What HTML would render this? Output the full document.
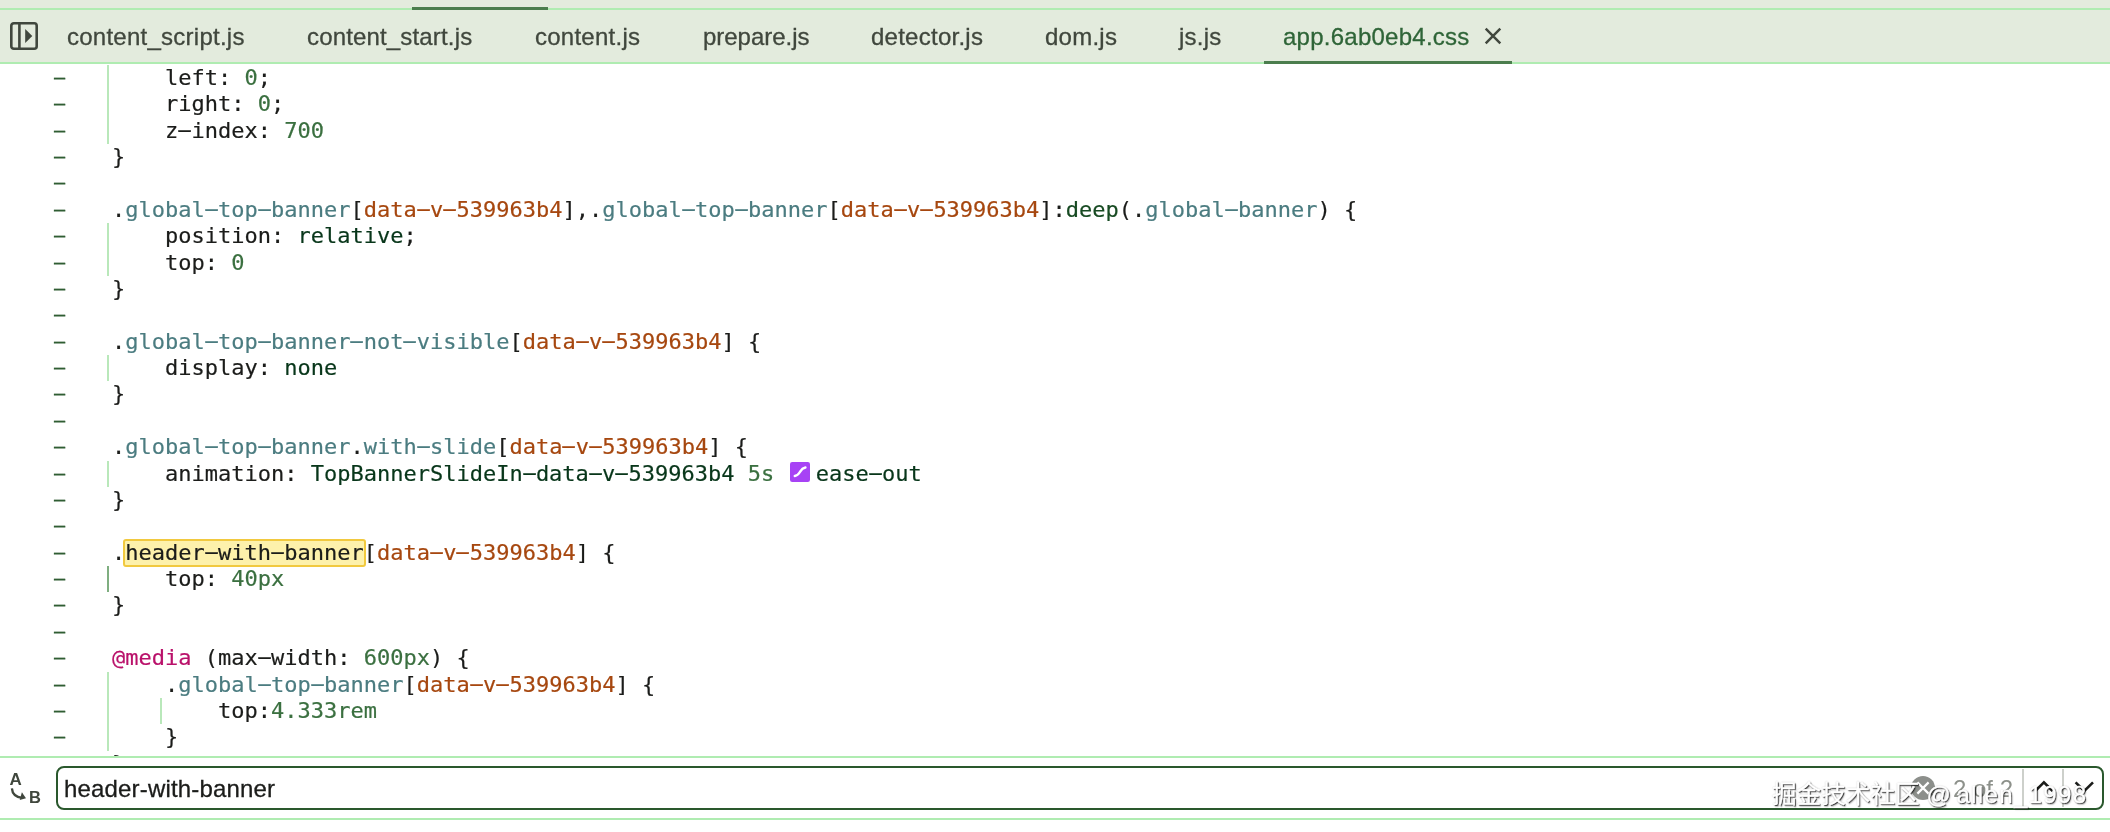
<!DOCTYPE html>
<html lang="en">
<head>
<meta charset="utf-8">
<title>DevTools Sources</title>
<style>
  html, body { margin: 0; padding: 0; }
  body {
    width: 2110px; height: 832px; overflow: hidden; position: relative;
    background: #ffffff;
    font-family: "Liberation Sans", "Noto Sans CJK SC", sans-serif;
  }
  /* ---------- top tab bar ---------- */
  #tabbar {
    position: absolute; left: 0; top: 0; width: 2110px; height: 64px;
    background: #e3ebdd; will-change: transform;
  }
  #tabbar .line-top { position: absolute; left: 0; top: 8px; width: 100%; height: 2px; background: #afecb1; }
  #tabbar .line-bot { position: absolute; left: 0; top: 62px; width: 100%; height: 2px; background: #afecb1; }
  #tabbar .dark-top { position: absolute; left: 412px; top: 7px; width: 136px; height: 3px; background: #4b7d4d; }
  #tabbar .sel-line { position: absolute; left: 1264px; top: 61px; width: 247.8px; height: 3px; background: #4b7d4d; }
  .tab {
    position: absolute; top: 22px; height: 30px; line-height: 30px;
    font-size: 24px; color: #40473d; white-space: nowrap;
    letter-spacing: 0.25px; -webkit-text-stroke: 0.3px currentColor;
  }
  .tab.sel { color: #2f6538; }
  #navicon { position: absolute; left: 9px; top: 21px; }
  #closex { position: absolute; left: 1483px; top: 26px; }

  /* ---------- code ---------- */
  #code {
    position: absolute; left: 0; top: 64.6px; width: 2110px; height: 691.4px; overflow: hidden;
    font-family: "DejaVu Sans Mono", "Liberation Mono", monospace;
    font-size: 22px; line-height: 26.37px; color: #1b1c1a;
    -webkit-text-stroke: 0.2px currentColor; will-change: transform;
  }
  .ln { position: absolute; left: 0; height: 26.37px; white-space: pre; }
  .ln .g { position: absolute; left: 53px; top: 0; color: #2f5d33; display: inline-block; transform: scaleX(0.84); transform-origin: 50% 50%; -webkit-text-stroke: 0.3px #2f5d33; margin-top: -1px; }
  .h { display: inline-block; transform: translateY(-1px) scaleX(2.2); transform-origin: 50% 50%; }
  .ln .t { position: absolute; left: 112px; top: 0; white-space: pre; }
  .sel { color: #4b7c80; }
  .att { color: #a6470f; }
  .num { color: #3b7040; }
  .kw  { color: #08361a; }
  .ps  { color: #174a22; }
  .at  { color: #b9116a; }
  .sw { display: inline-block; width: 20px; height: 20px; margin: 0 5.7px 0 2.6px; vertical-align: top; position: relative; top: 1.2px; }
  .sw svg { display: block; }
  .guide { position: absolute; width: 2px; background: #b9e8ba; }
  .guide.act { background: #7fae80; }
  .hl { color: #1b1c1a; }
  .hlbox { position: absolute; background: #fdf1ab; border: 2px solid #f1c93f; border-radius: 3px; }

  /* ---------- search bar ---------- */
  #search { position: absolute; left: 0; top: 756px; width: 2110px; height: 76px; background: #fff; will-change: transform; }
  #search .l1 { position: absolute; left: 0; top: 0; width: 100%; height: 2px; background: #afecb1; }
  #search .l2 { position: absolute; left: 0; top: 62px; width: 100%; height: 2px; background: #afecb1; }
  #box {
    position: absolute; left: 56px; top: 10px; width: 2043.5px; height: 40px;
    border: 2px solid #2a582d; border-radius: 8px; background: #fff;
  }
  #q { position: absolute; left: 64px; top: 18px; font-size: 24px; line-height: 30px; color: #1b1c1a; white-space: nowrap; letter-spacing: 0.17px; -webkit-text-stroke: 0.3px currentColor; }
  #ab { position: absolute; left: 0; top: 0; width: 56px; height: 62px; font-weight: bold; font-size: 17px; line-height: 17px; color: #40473d; }
  #ab .a { position: absolute; left: 9.5px; top: 14.5px; }
  #ab .b { position: absolute; left: 29px; top: 33px; font-size: 16.5px; }
  #ab svg { position: absolute; left: 0; top: 0; }
  #clear { position: absolute; left: 1911px; top: 20px; width: 24px; height: 24px; border-radius: 50%; background: #8c8f8b; }
  #count { position: absolute; left: 1953px; top: 18px; font-size: 24px; line-height: 30px; color: #8d918b; white-space: nowrap; }
  .vsep { position: absolute; top: 12.5px; width: 2px; height: 38.5px; background: #cdd0cb; }
  #chev { position: absolute; left: 2024px; top: 11.4px; }
  #wm {
    position: absolute; left: 1772px; top: 21.5px; font-size: 24.6px; -webkit-text-stroke: 0.4px #fff; line-height: 34px; color: #ffffff; white-space: nowrap;
    text-shadow: 1px 1px 0.8px rgba(0,0,0,0.72), 1.5px 1.5px 1.5px rgba(0,0,0,0.22), 0 0 1.5px rgba(0,0,0,0.3);
  }
  #wm .lat { font-size: 24px; letter-spacing: 1.35px; }
  #wm .atc { margin-right: 4.3px; }
</style>
</head>
<body>

<div id="tabbar">
  <div class="line-top"></div>
  <div class="line-bot"></div>
  <div class="dark-top"></div>
  <div class="sel-line"></div>
  <svg id="navicon" width="30" height="30" viewBox="0 0 30 30">
    <rect x="2.3" y="2.3" width="25.4" height="25.4" rx="2.5" fill="none" stroke="#40473d" stroke-width="2.6"/>
    <rect x="9.1" y="2" width="2.6" height="26" fill="#40473d"/>
    <path d="M16.2 8 L23.3 15 L16.2 22 Z" fill="#40473d"/>
  </svg>
  <div class="tab" style="left:67px">content_script.js</div>
  <div class="tab" style="left:307px;letter-spacing:0.16px">content_start.js</div>
  <div class="tab" style="left:535px">content.js</div>
  <div class="tab" style="left:703px;letter-spacing:-0.03px">prepare.js</div>
  <div class="tab" style="left:871px">detector.js</div>
  <div class="tab" style="left:1045px">dom.js</div>
  <div class="tab" style="left:1179px">js.js</div>
  <div class="tab sel" style="left:1283px">app.6ab0eb4.css</div>
  <svg id="closex" width="20" height="20" viewBox="0 0 20 20">
    <path d="M2.7 2.7 L17.3 17.3 M17.3 2.7 L2.7 17.3" stroke="#40473d" stroke-width="2.45" fill="none"/>
  </svg>
</div>

<div id="code">
  <div class="hlbox" style="left:123.2px;top:473.6px;width:238.5px;height:24.6px"></div>
  <div class="ln" style="top:0.0px"><span class="g">–</span><span class="t">    <span class="pr">left</span>: <span class="num">0</span>;</span></div>
  <div class="ln" style="top:26.37px"><span class="g">–</span><span class="t">    <span class="pr">right</span>: <span class="num">0</span>;</span></div>
  <div class="ln" style="top:52.74px"><span class="g">–</span><span class="t">    <span class="pr">z<span class="h">-</span>index</span>: <span class="num">700</span></span></div>
  <div class="ln" style="top:79.11px"><span class="g">–</span><span class="t">}</span></div>
  <div class="ln" style="top:105.48px"><span class="g">–</span><span class="t"></span></div>
  <div class="ln" style="top:131.85px"><span class="g">–</span><span class="t">.<span class="sel">global<span class="h">-</span>top<span class="h">-</span>banner</span>[<span class="att">data<span class="h">-</span>v<span class="h">-</span>539963b4</span>],.<span class="sel">global<span class="h">-</span>top<span class="h">-</span>banner</span>[<span class="att">data<span class="h">-</span>v<span class="h">-</span>539963b4</span>]:<span class="ps">deep</span>(.<span class="sel">global<span class="h">-</span>banner</span>) {</span></div>
  <div class="ln" style="top:158.22px"><span class="g">–</span><span class="t">    <span class="pr">position</span>: <span class="kw">relative</span>;</span></div>
  <div class="ln" style="top:184.59px"><span class="g">–</span><span class="t">    <span class="pr">top</span>: <span class="num">0</span></span></div>
  <div class="ln" style="top:210.96px"><span class="g">–</span><span class="t">}</span></div>
  <div class="ln" style="top:237.33px"><span class="g">–</span><span class="t"></span></div>
  <div class="ln" style="top:263.7px"><span class="g">–</span><span class="t">.<span class="sel">global<span class="h">-</span>top<span class="h">-</span>banner<span class="h">-</span>not<span class="h">-</span>visible</span>[<span class="att">data<span class="h">-</span>v<span class="h">-</span>539963b4</span>] {</span></div>
  <div class="ln" style="top:290.07px"><span class="g">–</span><span class="t">    <span class="pr">display</span>: <span class="kw">none</span></span></div>
  <div class="ln" style="top:316.44px"><span class="g">–</span><span class="t">}</span></div>
  <div class="ln" style="top:342.81px"><span class="g">–</span><span class="t"></span></div>
  <div class="ln" style="top:369.18px"><span class="g">–</span><span class="t">.<span class="sel">global<span class="h">-</span>top<span class="h">-</span>banner</span>.<span class="sel">with<span class="h">-</span>slide</span>[<span class="att">data<span class="h">-</span>v<span class="h">-</span>539963b4</span>] {</span></div>
  <div class="ln" style="top:395.55px"><span class="g">–</span><span class="t">    <span class="pr">animation</span>: <span class="kw">TopBannerSlideIn<span class="h">-</span>data<span class="h">-</span>v<span class="h">-</span>539963b4</span> <span class="num">5s</span> <span class="sw"><svg width="20" height="20" viewBox="0 0 20 20"><rect width="20" height="20" rx="2.2" fill="#a743f5"/><path d="M4.8 13.9 C8.6 13.2 9.3 11 10.1 9.7 C10.9 8.4 11.8 6.3 15.4 5.6" stroke="#fff" stroke-width="2.5" fill="none" stroke-linecap="round"/></svg></span><span class="kw">ease<span class="h">-</span>out</span></span></div>
  <div class="ln" style="top:421.92px"><span class="g">–</span><span class="t">}</span></div>
  <div class="ln" style="top:448.29px"><span class="g">–</span><span class="t"></span></div>
  <div class="ln" style="top:474.66px"><span class="g">–</span><span class="t">.<span class="hl">header<span class="h">-</span>with<span class="h">-</span>banner</span>[<span class="att">data<span class="h">-</span>v<span class="h">-</span>539963b4</span>] {</span></div>
  <div class="ln" style="top:501.03px"><span class="g">–</span><span class="t">    <span class="pr">top</span>: <span class="num">40px</span></span></div>
  <div class="ln" style="top:527.4px"><span class="g">–</span><span class="t">}</span></div>
  <div class="ln" style="top:553.77px"><span class="g">–</span><span class="t"></span></div>
  <div class="ln" style="top:580.14px"><span class="g">–</span><span class="t"><span class="at">@media</span> (max<span class="h">-</span>width: <span class="num">600px</span>) {</span></div>
  <div class="ln" style="top:606.51px"><span class="g">–</span><span class="t">    .<span class="sel">global<span class="h">-</span>top<span class="h">-</span>banner</span>[<span class="att">data<span class="h">-</span>v<span class="h">-</span>539963b4</span>] {</span></div>
  <div class="ln" style="top:632.88px"><span class="g">–</span><span class="t">        <span class="pr">top</span>:<span class="num">4.333rem</span></span></div>
  <div class="ln" style="top:659.25px"><span class="g">–</span><span class="t">    }</span></div>
  <div class="ln" style="top:685.62px"><span class="g">–</span><span class="t">}</span></div>
  <div class="guide" style="left:107px;top:0.0px;height:79.11px"></div>
  <div class="guide" style="left:107px;top:158.22px;height:52.74px"></div>
  <div class="guide" style="left:107px;top:290.07px;height:26.37px"></div>
  <div class="guide" style="left:107px;top:395.55px;height:26.37px"></div>
  <div class="guide act" style="left:107px;top:501.03px;height:26.37px"></div>
  <div class="guide" style="left:107px;top:606.51px;height:79.11px"></div>
  <div class="guide" style="left:160px;top:632.88px;height:26.37px"></div>
</div>

<div id="search">
  <div class="l1"></div>
  <div class="l2"></div>
  <div id="box"></div>
  <div id="ab">
    <span class="a">A</span><span class="b">B</span>
    <svg width="56" height="62" viewBox="0 0 56 62">
      <path d="M11.9 32.3 C12.3 37.6 15.8 41 22 41.9" stroke="#40473d" stroke-width="2.3" fill="none"/>
      <path d="M21.9 36.3 L26 42.3 L19.7 43.9 Z" fill="#40473d"/>
    </svg>
  </div>
  <div id="q">header-with-banner</div>
  <div id="clear">
    <svg width="24" height="24" viewBox="0 0 24 24"><path d="M6.4 6.4 L17.6 17.6 M17.6 6.4 L6.4 17.6" stroke="#fff" stroke-width="2.2" fill="none"/></svg>
  </div>
  <div id="count">2 of 2</div>
  <div class="vsep" style="left:2022px"></div>
  <div class="vsep" style="left:2062px"></div>
  <svg id="chev" width="76" height="40" viewBox="0 0 76 40">
    <path d="M11.2 24 L19.9 15.4 L28.6 24" stroke="#1b1c1a" stroke-width="2.6" fill="none"/>
    <path d="M51.6 15.4 L60.3 24 L69 15.4" stroke="#1b1c1a" stroke-width="2.6" fill="none"/>
  </svg>
  <div id="wm">掘金技术社区 <span class="lat"><span class="atc">@</span>allen_1998</span></div>
</div>

</body>
</html>
